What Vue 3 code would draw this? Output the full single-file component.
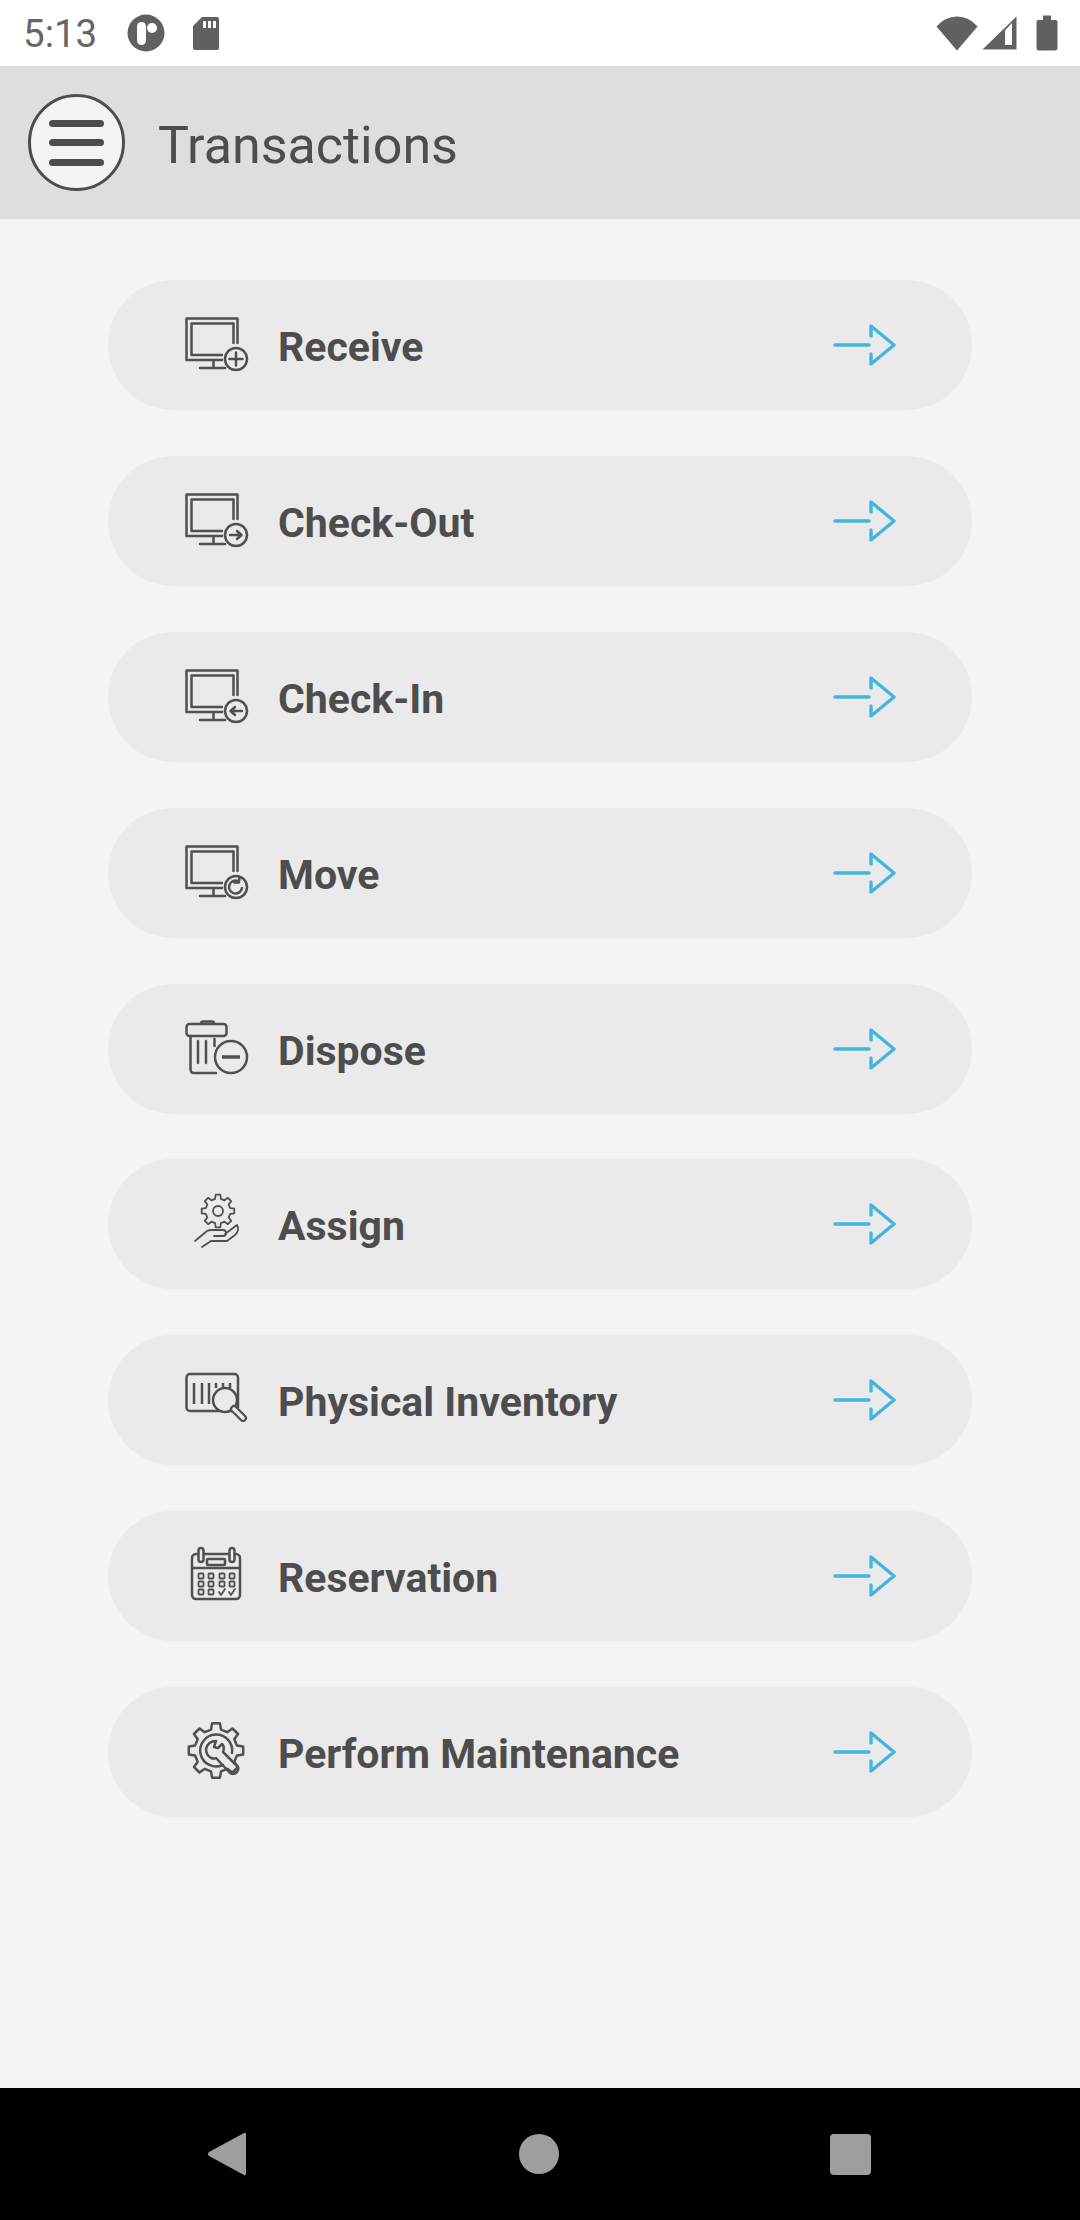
<script setup>
const rows = [
  { label: 'Receive', icon: 'plus' },
  { label: 'Check-Out', icon: 'out' },
  { label: 'Check-In', icon: 'in' },
  { label: 'Move', icon: 'move' },
  { label: 'Dispose', icon: 'dispose' },
  { label: 'Assign', icon: 'assign' },
  { label: 'Physical Inventory', icon: 'inventory' },
  { label: 'Reservation', icon: 'calendar' },
  { label: 'Perform Maintenance', icon: 'maintenance' }
]

const monitorIcons = ['plus', 'out', 'in', 'move']

// closed gear outline, used by the Assign and Maintenance icons
function gearPath(cx, cy, outer, inner, teeth) {
  const step = (Math.PI * 2) / teeth
  const pts = []
  for (let i = 0; i < teeth; i++) {
    const a = i * step - Math.PI / 2
    const offsets = [
      [-0.3, inner],
      [-0.18, outer],
      [0.18, outer],
      [0.3, inner]
    ]
    for (const [o, r] of offsets) {
      const t = a + o * step
      pts.push((cx + Math.cos(t) * r).toFixed(1) + ' ' + (cy + Math.sin(t) * r).toFixed(1))
    }
  }
  return 'M' + pts.join('L') + 'Z'
}

const smallGear = gearPath(33, 19, 16.5, 12.5, 8)
const bigGear = gearPath(31, 30.5, 27.5, 21.5, 8)

const calendarCols = [16, 26, 37, 47]
const calendarRows = [32, 40, 48]
</script>

<template>
  <div class="screen">
    <div class="status">
      <span class="time">5:13</span>
      <svg class="st-p" width="38" height="38" viewBox="0 0 38 38">
        <circle cx="19" cy="19" r="18.5" fill="#616161" />
        <rect x="10" y="8" width="9" height="23" rx="4.5" fill="#fff" />
        <circle cx="25" cy="14" r="5" fill="#fff" />
      </svg>
      <svg class="st-sd" width="28" height="35" viewBox="0 0 28 35">
        <path d="M10 1H25Q27 1 27 3V32Q27 34 25 34H3Q1 34 1 32V10Z" fill="#616161" />
        <path d="M11 5h3v7h-3zM16 5h3v7h-3zM21 5h3v7h-3z" fill="#fff" />
      </svg>
      <svg class="st-wifi" width="42" height="35" viewBox="0 0 42 35">
        <path d="M21 34.500L.5 10.500Q9 .5 21 .5T41.500 10.500Z" fill="#616161" />
      </svg>
      <svg class="st-signal" width="35" height="34" viewBox="0 0 35 34">
        <path d="M34.500 .5V33.500H.5Z" fill="#616161" />
        <path d="M23 14.500L30 7V29H23Z" fill="#fff" />
      </svg>
      <svg class="st-battery" width="22" height="36" viewBox="0 0 22 36">
        <path d="M7 .5H15V5H19.500Q21.500 5 21.500 7V33Q21.500 35.500 19 35.500H3Q.5 35.500 .5 33V7Q.5 5 2.500 5H7Z" fill="#616161" />
      </svg>
    </div>

    <header class="topbar">
      <div class="menu-btn">
        <span></span>
        <span></span>
        <span></span>
      </div>
      <h1 class="title">Transactions</h1>
    </header>

    <main class="list">
      <div v-for="row in rows" :key="row.label" class="pill">
        <svg class="icon" width="64" height="64" viewBox="0 0 64 64">
          <g fill="none" stroke="#505050" stroke-width="2.500" stroke-linecap="round" stroke-linejoin="round">
            <template v-if="monitorIcons.includes(row.icon)">
              <path d="M37 47H1.500V5.500H52.500V30" />
              <path d="M37 42H6.500V10.500H48.500V30" />
              <path d="M28.500 47V55M15 55H40" />
              <circle cx="51" cy="46" r="11" />
              <path v-if="row.icon === 'plus'" d="M51 39.500V52.500M44.500 46H57.500" stroke-width="2.500" />
              <path v-if="row.icon === 'out'" d="M45 46H56M52 42L56.500 46L52 50" stroke-width="2.500" />
              <path v-if="row.icon === 'in'" d="M46 46H57M50 42L45.500 46L50 50" stroke-width="2.500" />
              <path v-if="row.icon === 'move'" d="M57 47A6.500 6.500 0 1 1 53 40M54.500 36.500L54 41.500H49.500" stroke-width="2.500" />
            </template>

            <template v-else-if="row.icon === 'dispose'">
              <rect x="1.500" y="7" width="40" height="12" rx="3" />
              <path d="M16 6.500Q16 4.500 18 4.500H27Q29 4.500 29 6.500" />
              <path d="M5.500 19V52Q5.500 56 9 56H31" />
              <path d="M13 24V46M21 24V46M29.500 22V29" stroke-width="2.500" />
              <circle cx="46" cy="40" r="16" />
              <path d="M37 40H55" stroke-width="3.500" stroke-linecap="butt" />
            </template>

            <template v-else-if="row.icon === 'assign'">
              <path :d="smallGear" stroke-width="1.800" />
              <circle cx="33" cy="19" r="5" stroke-width="1.800" />
              <path d="M10 49L22 39Q24 38 27 38H38Q41 38 41 41Q41 44 38 44H29M40 42L52 33Q55 38 50 43L42 49H26L17 55" stroke-width="1.800" />
            </template>

            <template v-else-if="row.icon === 'inventory'">
              <rect x="1.500" y="6" width="51.500" height="37" rx="3.500" />
              <path d="M9 15V36M17 15V36M24 15V36M31 15V20M38 15V20M45 15V20" stroke-width="2.500" stroke-linecap="butt" />
              <circle cx="40" cy="32" r="12" fill="#eaeaea" />
              <path d="M49 41L58 50" stroke="#505050" stroke-width="8" />
              <path d="M49 41L58 50" stroke="#eaeaea" stroke-width="3.600" />
            </template>

            <template v-else-if="row.icon === 'calendar'">
              <rect x="7" y="10" width="48" height="45" rx="4" />
              <path d="M7 24H55" />
              <rect x="13.500" y="4" width="5" height="14" rx="2.500" fill="#eaeaea" />
              <rect x="44.500" y="4" width="5" height="14" rx="2.500" fill="#eaeaea" />
              <rect x="22" y="15" width="18" height="6" rx="1" />
              <template v-for="(y, ri) in calendarRows" :key="y">
                <template v-for="(x, ci) in calendarCols" :key="x">
                  <path v-if="ri === 2 && ci > 1" :d="`M${x - 3} ${y}l2 3l4 -6`" stroke-width="1.800" />
                  <rect v-else :x="x - 2.500" :y="y - 2.500" width="5" height="5" rx=".8" stroke-width="1.800" />
                </template>
              </template>
            </template>

            <template v-else-if="row.icon === 'maintenance'">
              <path :d="bigGear" />
              <path d="M38 45A16 16 0 1 1 47 33" />
              <path d="M31 21Q23 21 21 29Q21 35 26 38Q29 39 31 38L44 52Q48 56 52 52Q55 48 51 45L38 32Q40 27 37 24L33 28L29 27Z" />
            </template>
          </g>
        </svg>
        <span class="label">{{ row.label }}</span>
        <svg class="arrow" width="64" height="44" viewBox="0 0 64 44">
          <path
            d="M3 22H37M39 13V3L62 22L39 41V31"
            fill="none"
            stroke="#42b4e6"
            stroke-width="3.400"
            stroke-linecap="round"
            stroke-linejoin="round"
          />
        </svg>
      </div>
    </main>

    <nav class="navbar">
      <svg width="40" height="46" viewBox="0 0 40 46">
        <path d="M37 2Q39 1 39 4V42Q39 45 37 44L2 25Q0 23 2 21Z" fill="#9e9e9e" />
      </svg>
      <div class="nav-home"></div>
      <div class="nav-square"></div>
    </nav>
  </div>
</template>

<style>
html,
body {
  margin: 0;
  background: #f4f4f4;
}
</style>

<style scoped>
.screen {
  width: 1080px;
  height: 2220px;
  display: flex;
  flex-direction: column;
  font-family: Roboto, 'Liberation Sans', sans-serif;
  background: #f4f4f4;
  color: #4d4d4d;
}
.status {
  height: 66px;
  flex-shrink: 0;
  background: #fff;
  display: flex;
  align-items: center;
  padding-left: 23px;
  box-sizing: border-box;
}
.time {
  font-size: 38.500px;
  color: #666;
  width: 104px;
}
.st-sd {
  margin-left: 27px;
}
.st-wifi {
  margin-left: auto;
}
.st-signal {
  margin-left: 4px;
}
.st-battery {
  margin-left: 19px;
  margin-right: 22px;
}
.topbar {
  height: 153px;
  flex-shrink: 0;
  background: #dedede;
  display: flex;
  align-items: center;
  padding-left: 28px;
  box-sizing: border-box;
}
.menu-btn {
  width: 97px;
  height: 97px;
  box-sizing: border-box;
  border: 3.500px solid #4d4d4d;
  border-radius: 50%;
  background: #f4f4f4;
  display: flex;
  flex-direction: column;
  align-items: center;
  justify-content: center;
  gap: 12.500px;
}
.menu-btn span {
  width: 55px;
  height: 7px;
  border-radius: 4px;
  background: #4d4d4d;
}
.title {
  margin: 5px 0 0 33px;
  font-size: 52px;
  font-weight: 400;
  color: #4d4d4d;
}
.list {
  flex: 1;
  display: flex;
  flex-direction: column;
  gap: 45.900px;
  padding: 61px 108px 0;
}
.pill {
  height: 130px;
  flex-shrink: 0;
  border-radius: 65px;
  background: #eaeaea;
  display: flex;
  align-items: center;
  padding: 0 76px 0 77px;
}
.label {
  margin: 4px 0 0 29px;
  font-size: 41px;
  font-weight: 700;
  color: #4d4d4d;
}
.arrow {
  margin-left: auto;
}
.navbar {
  height: 132px;
  flex-shrink: 0;
  background: #000;
  display: flex;
  align-items: center;
  justify-content: space-between;
  padding: 0 209px 0 207px;
}
.nav-home {
  width: 40px;
  height: 40px;
  border-radius: 50%;
  background: #9e9e9e;
}
.nav-square {
  width: 41px;
  height: 41px;
  border-radius: 4px;
  background: #9e9e9e;
}
</style>
